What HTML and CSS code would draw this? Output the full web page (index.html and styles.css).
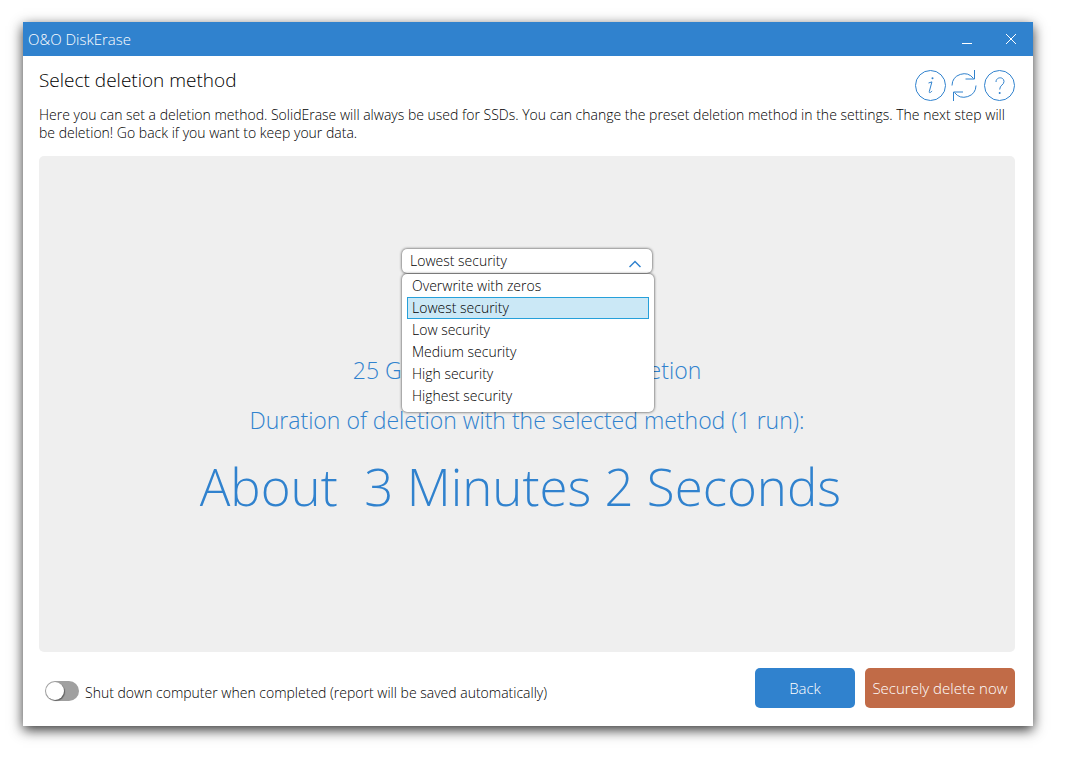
FILE: index.html
```
<!DOCTYPE html>
<html lang="en">
<head>
    <meta charset="UTF-8">
    <meta name="viewport" content="width=device-width, initial-scale=1.0">
    <title>O&amp;O DiskErase</title>
    <link rel="stylesheet" href="styles.css">
</head>
<body>

    <div class="window">
        <header class="titlebar">
            <span>O&amp;O DiskErase</span>
            <div class="window-buttons">
                <button type="button" aria-label="Minimize">
                    <svg width="12" height="12" viewBox="0 0 12 12"><path d="M1 10.5h10" /></svg>
                </button>
                <button type="button" aria-label="Close">
                    <svg width="12" height="12" viewBox="0 0 12 12"><path d="M1 1l10 10M11 1L1 11" /></svg>
                </button>
            </div>
        </header>

        <main class="content">
            <div class="heading">
                <h1>Select deletion method</h1>
                <div class="tools">
                    <button type="button" aria-label="Information">
                        <svg width="32" height="32" viewBox="0 0 32 32">
                            <circle cx="15.5" cy="16.5" r="15" />
                            <path d="M13.5 14c1.2-.3 2.3-.8 3.4-1.1l-2.600 9.600c-.4 1.600 1 1.600 2.800-.6" />
                            <circle class="dot" cx="17.500" cy="9.300" r="1" />
                        </svg>
                    </button>
                    <button type="button" aria-label="Refresh">
                        <svg width="28" height="32" viewBox="0 0 28 32">
                            <path d="M1 16.500a12 12 0 0 1 21.500-7M25 16.500a12 12 0 0 1-21.500 7" />
                            <path d="M23.500 1v9h-9M2.500 32v-9h9.500" />
                        </svg>
                    </button>
                    <button type="button" aria-label="Help">
                        <svg width="32" height="32" viewBox="0 0 32 32">
                            <circle cx="16.5" cy="16.5" r="15" />
                            <path d="M13 13c0-5.500 8-5.500 8-.5 0 3.500-4.300 3.500-4.300 8" />
                            <circle class="dot" cx="16.700" cy="24" r="1" />
                        </svg>
                    </button>
                </div>
            </div>
            <p class="intro">Here you can set a deletion method. SolidErase will always be used for SSDs. You can change the preset deletion method in the settings. The next step will be deletion! Go back if you want to keep your data.</p>

            <section class="panel">
                <div class="method">
                    <select class="method-select" aria-label="Deletion method">
                        <option>Overwrite with zeros</option>
                        <option selected>Lowest security</option>
                        <option>Low security</option>
                        <option>Medium security</option>
                        <option>High security</option>
                        <option>Highest security</option>
                    </select>
                    <svg class="chevron" width="12" height="8" viewBox="0 0 12 8"><path d="M.5 7L6 1.500 11.500 7" /></svg>
                    <ul class="method-list" role="listbox" aria-label="Deletion methods">
                        <li role="option">Overwrite with zeros</li>
                        <li role="option" class="selected" aria-selected="true">Lowest security</li>
                        <li role="option">Low security</li>
                        <li role="option">Medium security</li>
                        <li role="option">High security</li>
                        <li role="option">Highest security</li>
                    </ul>
                </div>
                <p class="summary">25 GB in use selected for deletion</p>
                <p class="summary">Duration of deletion with the selected method (1 run):</p>
                <p class="duration">About&nbsp; 3 Minutes 2 Seconds&nbsp;</p>
            </section>

            <footer class="actions">
                <input type="checkbox" class="switch" id="shutdown">
                <label for="shutdown">Shut down computer when completed (report will be saved automatically)</label>
                <button type="button" class="btn">Back</button>
                <button type="button" class="btn btn-delete">Securely delete now</button>
            </footer>
        </main>
    </div>

</body>
</html>
```
FILE: styles.css
```
* {
    box-sizing: border-box;
}

body {
    margin: 0;
    padding: 22px 34px 37px 23px;
    min-height: 100vh;
    display: flex;
    background: #ffffff;
    color: #000000;
    font-family: "Open Sans", "Segoe UI", sans-serif;
    font-size: 14px;
    font-weight: 300;
    line-height: 18px;
}

button,
select {
    font: inherit;
    border: none;
    cursor: pointer;
}

h1,
p,
ul {
    margin: 0;
    padding: 0;
}

svg {
    display: block;
    fill: none;
    stroke: currentColor;
}

.window {
    flex: 1;
    display: flex;
    flex-direction: column;
    background: #ffffff;
    box-shadow: 0 4px 12px rgba(0, 0, 0, 0.8);
}

/* Title bar */
.titlebar {
    display: flex;
    justify-content: space-between;
    align-items: center;
    height: 34px;
    padding: 0 0 0 5px;
    background: #3082ce;
    color: #ffffff;
    font-size: 15px;
}

.window-buttons {
    display: flex;
}

.window-buttons button {
    display: flex;
    justify-content: center;
    align-items: center;
    width: 44px;
    height: 34px;
    padding: 0;
    background: transparent;
    color: #ffffff;
}

/* Content */
.content {
    flex: 1;
    display: flex;
    flex-direction: column;
    padding: 12px 18px 18px 16px;
}

.heading {
    display: flex;
    justify-content: space-between;
    height: 38px;
}

h1 {
    font-size: 19px;
    font-weight: 300;
    line-height: 24px;
}

.tools {
    display: flex;
    gap: 4px;
    padding-top: 1px;
}

.tools button {
    height: 32px;
    padding: 0;
    background: transparent;
    color: #3082ce;
}

.dot {
    fill: currentColor;
    stroke: none;
}

.panel {
    flex: 1;
    display: flex;
    flex-direction: column;
    align-items: center;
    margin-top: 14px;
    padding-top: 93px;
    border-radius: 5px;
    background: #efefef;
    color: #3082ce;
    text-align: center;
}

/* Method drop-down */
.method {
    position: relative;
    width: 250px;
    margin-bottom: 80px;
    color: #000000;
    text-align: left;
}

.method-select {
    display: block;
    appearance: none;
    width: 100%;
    height: 24px;
    padding: 0 8px;
    border-radius: 5px;
    background: #ffffff;
    color: #000000;
    box-shadow: 0 0 3px rgba(0, 0, 0, 0.8);
}

.chevron {
    position: absolute;
    top: 11px;
    right: 11px;
    color: #3082ce;
    stroke-width: 1.5;
    pointer-events: none;
}

.method-list {
    position: absolute;
    top: 25px;
    left: 0;
    width: 252px;
    padding: 1px 5px 5px;
    border-radius: 5px;
    background: #ffffff;
    box-shadow: 0 0 3px rgba(0, 0, 0, 0.8);
    list-style: none;
}

.method-list li {
    padding: 1px 4px;
    border: 1px solid transparent;
}

.method-list .selected {
    border-color: #26a0da;
    background: #cbe8f6;
}

.summary {
    font-size: 23px;
    line-height: 34px;
    margin-bottom: 16px;
}

.duration {
    font-size: 51px;
    line-height: 66px;
}

/* Bottom row */
.actions {
    display: flex;
    align-items: center;
    gap: 10px;
    margin-top: 16px;
}

.actions label {
    flex: 1;
    margin: 10px 0 0 -4px;
}

.switch {
    appearance: none;
    flex-shrink: 0;
    width: 34px;
    height: 20px;
    margin: 6px 0 0 6px;
    border-radius: 10px;
    background: #a0a0a0;
}

.switch::before {
    content: "";
    display: block;
    width: 18px;
    height: 18px;
    margin: 1px;
    border-radius: 50%;
    background: #ffffff;
    box-shadow: 1px 1px 1px rgba(0, 0, 0, 0.4);
}

.switch:checked {
    background: #3082ce;
}

.switch:checked::before {
    margin-left: 15px;
}

.btn {
    width: 100px;
    height: 40px;
    padding: 0;
    border-radius: 5px;
    background: #3082ce;
    color: #ffffff;
    font-size: 15px;
}

.btn-delete {
    width: 150px;
    background: #c16b47;
}
```
